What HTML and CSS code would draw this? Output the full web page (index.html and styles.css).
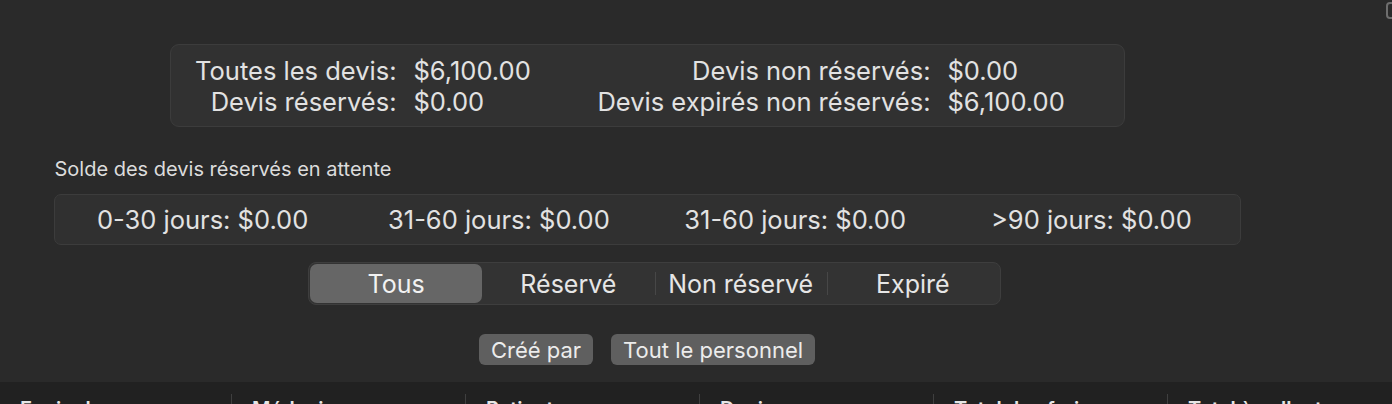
FILE: index.html
```html
<!DOCTYPE html>
<html lang="fr">
  <head>
    <meta charset="UTF-8" />
    <meta name="viewport" content="width=device-width, initial-scale=1.0" />
    <title>Devis</title>
    <link rel="stylesheet" href="styles.css">
  </head>
  <body>
    <div class="window">
      <main class="content">
        <section class="summary">
          <span class="label">Toutes les devis:</span>
          <span class="value">$6,100.00</span>
          <span class="label">Devis non réservés:</span>
          <span class="value">$0.00</span>
          <span class="label">Devis réservés:</span>
          <span class="value">$0.00</span>
          <span class="label">Devis expirés non réservés:</span>
          <span class="value">$6,100.00</span>
        </section>

        <section class="aging">
          <h2 class="aging-title">Solde des devis réservés en attente</h2>
          <div class="aging-box">
            <span>0-30 jours: $0.00</span>
            <span>31-60 jours: $0.00</span>
            <span>31-60 jours: $0.00</span>
            <span>&gt;90 jours: $0.00</span>
          </div>
        </section>

        <div class="segment-row">
          <div class="segmented">
            <button class="segment active">Tous</button>
            <button class="segment">Réservé</button>
            <button class="segment divided">Non réservé</button>
            <button class="segment divided">Expiré</button>
          </div>
        </div>

        <div class="filters">
          <button class="pill">Créé par</button>
          <button class="pill">Tout le personnel</button>
        </div>
      </main>

      <div class="table-head">
        <div class="col">Expire le</div>
        <div class="col">Médecin</div>
        <div class="col">Patient</div>
        <div class="col">Devis</div>
        <div class="col">Total des frais</div>
        <div class="col">Total à collecter</div>
      </div>

      <span class="corner"></span>
    </div>
  </body>
</html>
```

FILE: styles.css
```css
* {
  box-sizing: border-box;
  margin: 0;
  padding: 0;
}
body {
  background-color: #2a2a2a;
  color: #e2e2e2;
  font-family: Inter, "Noto Sans", sans-serif;
  overflow: hidden;
}
.window {
  position: relative;
  width: 1392px;
  height: 404px;
  overflow: hidden;
}
.content {
  width: 1294px;
  padding-top: 44px;
  display: flex;
  flex-direction: column;
  align-items: center;
}

/* totals box */
.summary {
  width: 955px;
  height: 83px;
  display: grid;
  grid-template-columns: 216px 150px 350px 1fr;
  column-gap: 17px;
  align-content: center;
  padding-left: 10px;
  background-color: #313131;
  border: 1px solid #3c3c3c;
  border-radius: 9px;
  font-size: 25.5px;
  line-height: 31px;
}
.summary .label {
  text-align: right;
}

/* aging */
.aging {
  width: 1187px;
  margin-top: 30px;
}
.aging-title {
  font-size: 20px;
  font-weight: 400;
  color: #dcdcdc;
  line-height: 24px;
  padding-left: 1px;
}
.aging-box {
  margin-top: 13px;
  height: 51px;
  display: grid;
  grid-template-columns: repeat(4, 1fr);
  align-items: center;
  text-align: center;
  background-color: #303030;
  border: 1px solid #3c3c3c;
  border-radius: 7px;
  font-size: 25.5px;
}

/* segmented control */
.segment-row {
  width: 100%;
  display: flex;
  justify-content: center;
  padding-left: 15px;
  margin-top: 17px;
}
.segmented {
  width: 693px;
  height: 43px;
  display: grid;
  grid-template-columns: repeat(4, 1fr);
  padding: 1px;
  background-color: #333333;
  border: 1px solid #3e3e3e;
  border-radius: 8px;
}
.segment {
  position: relative;
  background: none;
  border: none;
  color: #e6e6e6;
  font-family: inherit;
  font-size: 25px;
  border-radius: 7px;
}
.segment.active {
  background-color: #666666;
  color: #f2f2f2;
}
.segment.divided::before {
  content: "";
  position: absolute;
  left: 0;
  top: 8px;
  bottom: 8px;
  width: 1px;
  background-color: #474747;
}

/* filter buttons */
.filters {
  display: flex;
  gap: 18px;
  margin-top: 29px;
}
.pill {
  height: 31px;
  padding: 0 12px;
  background-color: #5f5f5f;
  border: none;
  border-radius: 6px;
  color: #ececec;
  font-family: inherit;
  font-size: 22px;
}

/* table header */
.table-head {
  margin-top: 17px;
  height: 40px;
  display: grid;
  grid-template-columns: 231px repeat(5, 234px);
  background-color: #212121;
  font-size: 20px;
  font-weight: 600;
  color: #e6e6e6;
}
.table-head .col {
  margin-top: 12px;
  padding: 3px 0 0 20px;
  border-left: 1px solid #3f3f3f;
}
.table-head .col:first-child {
  border-left: none;
}

.corner {
  position: absolute;
  top: 2px;
  left: 1386px;
  width: 12px;
  height: 17px;
  border: 2px solid #6e6e6e;
  border-radius: 4px;
}
```
